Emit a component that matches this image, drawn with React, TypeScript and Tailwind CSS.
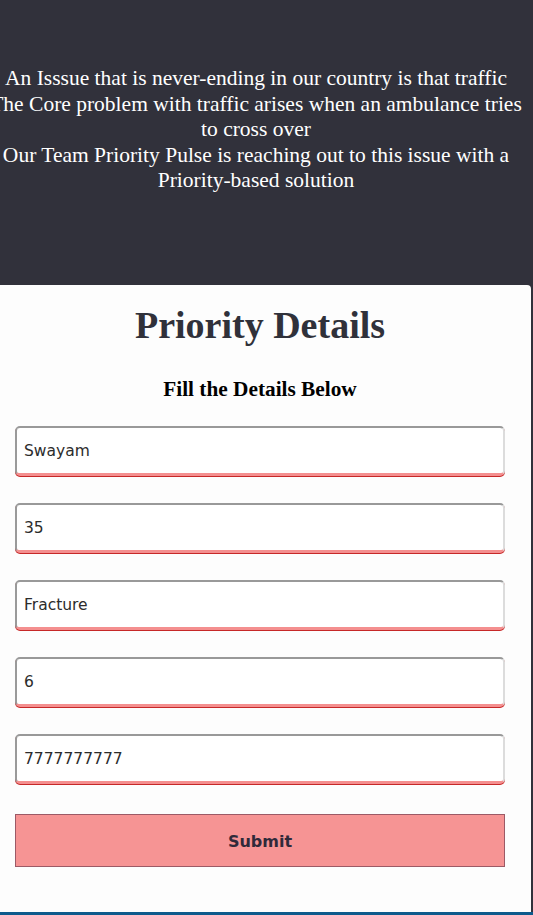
import { useState } from "react";

const lines = [
  "An Isssue that is never-ending in our country is that traffic",
  "The Core problem with traffic arises when an ambulance tries",
  "to cross over",
  "Our Team Priority Pulse is reaching out to this issue with a",
  "Priority-based solution",
];

export default function App() {
  const [inputs, setInputs] = useState({
    name: "Swayam",
    age: "35",
    issue: "Fracture",
    priority: "6",
    phone: "7777777777",
  });

  const handleChange = (e) => {
    setInputs((prev) => ({ ...prev, [e.target.name]: e.target.value }));
  };

  const fieldClass =
    "h-[50px] w-full rounded-[5px] border-2 border-t-[#999999] border-l-[#9a9a9a] border-r-[#dcdcdc] border-b-[3px] border-b-[#f48f8f] bg-white px-[7px] pt-[1px] text-[15.5px] text-[#2c2c2c] shadow-[0_1px_0_#c62828] outline-none";

  return (
    <main className="flex min-h-[915px] flex-col bg-[#31313b] font-['Liberation_Serif',serif]">
      <header className="h-[285px] overflow-hidden pt-[66px]">
        <div className="flex w-[512px] flex-col items-center text-[21.5px] leading-[25.5px] text-white">
          {lines.map((line) => (
            <p key={line} className="whitespace-nowrap">
              {line}
            </p>
          ))}
        </div>
      </header>

      <section className="mr-[2px] h-[627px] rounded-tr-[4px] bg-[#fdfdfd] pl-[15px] pr-[26px] pt-[18px]">
        <h1 className="text-center text-[38px] font-bold leading-[44px] text-[#30313a]">
          Priority Details
        </h1>
        <h2 className="mt-[29px] text-center text-[21.3px] font-bold leading-[26px] text-black">
          Fill the Details Below
        </h2>
        <form className="mt-[24px] flex flex-col gap-[27px] font-['DejaVu_Sans',sans-serif]">
          <input className={fieldClass} name="name" value={inputs.name} onChange={handleChange} />
          <input className={fieldClass} name="age" value={inputs.age} onChange={handleChange} />
          <input className={fieldClass} name="issue" value={inputs.issue} onChange={handleChange} />
          <input className={fieldClass} name="priority" value={inputs.priority} onChange={handleChange} />
          <input className={fieldClass} name="phone" value={inputs.phone} onChange={handleChange} />
          <button
            type="button"
            className="mt-[3px] h-[53px] w-full cursor-pointer border border-[#9c5a66] bg-[#f69494] pt-[3px] text-[16px] font-bold text-[#302a3a]"
          >
            Submit
          </button>
        </form>
      </section>
      <div className="h-[3px] bg-[#0d5a8c]" />
    </main>
  );
}
